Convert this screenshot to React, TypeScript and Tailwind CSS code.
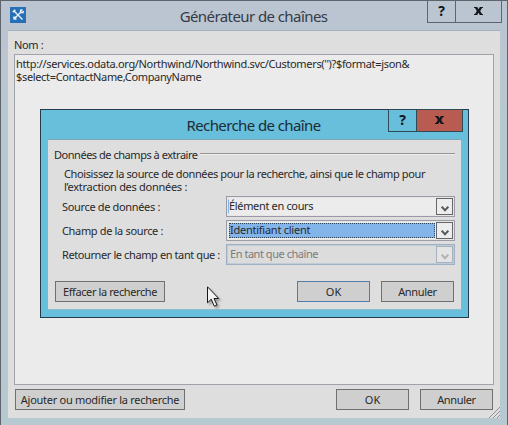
import type { ReactNode } from 'react';

function Button({ children, className = '' }: { children: ReactNode; className?: string }) {
  return (
    <button
      className={`flex h-[21px] shrink-0 items-center justify-center border bg-[#cfcfcf] pt-px whitespace-nowrap ${className}`}
    >
      {children}
    </button>
  );
}

function CaptionButtons({ danger = false }: { danger?: boolean }) {
  const line = danger ? 'border-[#2f4a57]' : 'border-[#5f6470]';
  return (
    <div className={`flex h-[22px] w-[75px] border border-t-0 ${line}`}>
      <div className={`flex w-[28px] items-center justify-center border-r pb-px ${line}`}>
        <span className="text-[14px] leading-none font-bold text-[#10151a]">?</span>
      </div>
      <div className={`flex flex-1 items-center justify-center pb-px ${danger ? 'bg-[#b85c52]' : ''}`}>
        <svg width="9" height="8" viewBox="0 0 9 8" fill="#15181d">
          <path d="M0 0h3.200L4.500 2.300 5.800 0H9v1H8L6.200 4 8 7h1v1H5.800L4.500 5.700 3.200 8H0V7h1l1.800-3L1 1H0z" />
        </svg>
      </div>
    </div>
  );
}

function Combo({ value, selected = false, disabled = false, caret = false, className = '' }: {
  value: string;
  selected?: boolean;
  disabled?: boolean;
  caret?: boolean;
  className?: string;
}) {
  return (
    <div
      className={`flex h-[21px] w-[229px] items-center border p-px ${
        disabled ? 'border-[#a0b0c3] bg-[#dcdcdc] text-[#7b7b7b] shadow-[inset_0_0_0_1px_#c0cbd8]' : 'border-[#9b9ba5] bg-[#ececec] shadow-[inset_0_0_0_1px_#e6e6e6]'
      }`}
    >
      <div
        className={`mr-px flex h-[15px] flex-1 items-center border whitespace-nowrap ${
          selected ? 'ml-px border-dotted border-[#27445f] bg-[#84b5ea]' : caret ? 'border-transparent border-l-[#84b5ea]' : 'ml-px border-transparent'
        }`}
      >
        <span className={`-mt-px ${className}`}>{value}</span>
      </div>
      <div
        className={`flex size-[17px] items-center justify-center border ${
          disabled ? 'border-[#a5b1bf] bg-[#e4e4e4]' : 'border-[#66666a] bg-[#ededed]'
        }`}
      >
        <svg width="8" height="6" viewBox="0 0 8 6" className="mt-1" fill="none" stroke={disabled ? '#b3b3b3' : '#5b5b5e'} strokeWidth="2">
          <path d="M.7.700L4 4.200 7.300.700" />
        </svg>
      </div>
    </div>
  );
}

function SearchDialog() {
  return (
    <div className="absolute top-[108px] left-[39px] flex h-[209px] w-[429px] flex-col border border-[#243c49] bg-[#67bfdb] px-[7px] pb-[7px]">
      <div className="relative flex h-[29px] shrink-0 items-center justify-center">
        <h2 className="mt-[2px] mr-[2px] text-[15px] leading-none tracking-[-0.6px] text-[#1c2c35]">Recherche de chaîne</h2>
        <div className="absolute -top-px -right-[2px] border-t border-[#2f4a57]">
          <CaptionButtons danger />
        </div>
      </div>
      <div className="flex flex-1 flex-col border-y border-t-[#7ba6b4] border-b-[#8fbccb] bg-[#dedede] px-[6px] pt-[7px]">
        <div className="flex h-[15px] items-center gap-[3px] whitespace-nowrap">
          <span className="w-[143px] tracking-[-0.47px]">Données de champs à extraire</span>
          <span className="mt-[-2px] h-[2px] flex-1 border-t border-[#949494] bg-[#eeeeee]" />
        </div>
        <p className="mt-[5px] pl-[10px] leading-[13px] whitespace-nowrap">
          <span className="block tracking-[-0.385px]">Choisissez la source de données pour la recherche, ainsi que le champ pour</span>
          <span className="block tracking-[-0.28px]">l’extraction des données :</span>
        </p>
        <div className="mt-[3px] flex flex-col gap-[3px] pl-[8px]">
          <div className="flex items-center whitespace-nowrap">
            <span className="w-[164px]">Source de données :</span>
            <Combo value="Élément en cours" caret />
          </div>
          <div className="flex items-center whitespace-nowrap">
            <span className="w-[164px]">Champ de la source :</span>
            <Combo value="Identifiant client" selected className="tracking-[-0.25px]" />
          </div>
          <div className="flex items-center whitespace-nowrap">
            <span className="w-[164px] tracking-[-0.4px]">Retourner le champ en tant que :</span>
            <Combo value="En tant que chaîne" disabled className="tracking-[-0.46px]" />
          </div>
        </div>
        <div className="mt-[16px] flex px-px">
          <Button className="w-[110px] border-[#707070] tracking-[-0.4px]">Effacer la recherche</Button>
          <Button className="ml-auto w-[73px] border-[#527da9] tracking-normal">OK</Button>
          <Button className="ml-[11px] w-[73px] border-[#707070]">Annuler</Button>
        </div>
      </div>
    </div>
  );
}

export default function App() {
  return (
    <div className="relative flex h-[425px] w-[508px] flex-col overflow-hidden border border-b-0 border-[#60646c] bg-linear-to-b from-[#bbc5d1] from-10% to-[#b7c9d0] to-30% px-[7px] pb-[7px] font-['Noto_Sans','Open_Sans',sans-serif] text-[11px] leading-[14px] tracking-[-0.34px] text-[#292929]">
      <header className="relative flex h-[29px] shrink-0 items-center justify-center">
        <svg className="absolute top-[6px] left-[2px]" width="16" height="16" viewBox="0 0 16 16">
          <path fill="#2870b5" d="M0 0h16v16H0z" />
          <path stroke="#eaf3fa" strokeWidth="1.400" fill="none" d="M4 4l8.500 8.500M11 5L3.500 12.500" />
          <path stroke="#eaf3fa" strokeWidth="1.600" fill="none" d="M2.800 5.200L5.300 2.800M12.500 2.800l-1.800.6v2l2 .2 1-1.500M3.200 10.400l2.300.2.2 2.200" />
        </svg>
        <h1 className="mt-px mr-px text-[15px] leading-none tracking-[-0.58px] text-[#343b44]">Générateur de chaînes</h1>
        <div className="absolute top-0 -right-[2px]">
          <CaptionButtons />
        </div>
      </header>
      <main className="relative flex w-[492px] flex-1 flex-col border-t border-[#a4b1be] bg-[#dedede] px-[6px]">
        <div className="mt-[7px] h-[16px]">Nom :</div>
        <div className="h-[331px] border border-[#a2a2aa] bg-[#ebebeb] pt-[2px] pl-px leading-[13px] whitespace-nowrap">
          <div>http://services.odata.org/Northwind/Northwind.svc/Customers('')?$format=json&amp;</div>
          <div>$select=ContactName,CompanyName</div>
        </div>
        <div className="mt-[4px] flex pl-px">
          <Button className="w-[170px] border-[#707070] tracking-[-0.28px]">Ajouter ou modifier la recherche</Button>
          <Button className="ml-auto w-[73px] border-[#707070] tracking-normal">OK</Button>
          <Button className="mr-px ml-[11px] w-[73px] border-[#707070]">Annuler</Button>
        </div>
        <svg className="absolute right-0 bottom-0" width="11" height="11" viewBox="0 0 11 11" stroke="#8d9298">
          <path d="M0 11L11 0M4 11l7-7M8 11l3-3" />
        </svg>
      </main>
      <SearchDialog />
      <svg className="absolute top-[285px] left-[206px] drop-shadow-[2px_2px_1px_rgba(0,0,0,0.3)]" width="13" height="22" viewBox="0 0 13 22">
        <path fill="#f2f2f2" stroke="#171717" d="M.5.800v16l3.700-3.600 3.100 7 2.700-1.200-3-6.500h4.700z" />
      </svg>
    </div>
  );
}
